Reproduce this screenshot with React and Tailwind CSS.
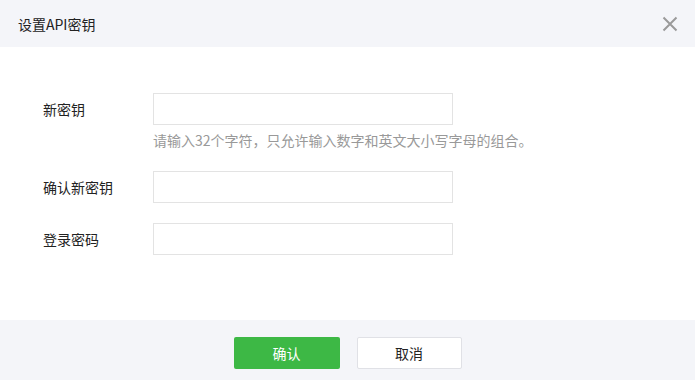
export default function App() {
  const font = { fontFamily: '"Noto Sans CJK SC", "Liberation Sans", sans-serif' };
  return (
    <div className="w-[695px] h-[380px] bg-white flex flex-col text-[14px] text-[#222]" style={font}>
      <div className="h-[47px] bg-[#f4f5f9] flex items-center justify-between pl-[18px] pr-[17px] shrink-0">
        <span className="text-[14px] text-[#222] leading-none">设置API密钥</span>
        <svg width="16" height="16" viewBox="0 0 16 16" className="text-[#9a9a9a]">
          <path d="M1.5 1.5 L14.5 14.5 M14.5 1.5 L1.5 14.5" stroke="currentColor" strokeWidth="2" fill="none" />
        </svg>
      </div>
      <div className="flex-1 pt-[46px] pl-[43px]">
        <div className="flex items-start">
          <div className="w-[110px] h-[32px] flex items-center">新密钥</div>
          <div className="flex flex-col">
            <div className="w-[300px] h-[32px] border border-[#e3e3e3] bg-white"></div>
            <div className="mt-[6px] text-[#999] leading-[18px]">请输入32个字符，只允许输入数字和英文大小写字母的组合。</div>
          </div>
        </div>
        <div className="flex items-center mt-[22px]">
          <div className="w-[110px]">确认新密钥</div>
          <div className="w-[300px] h-[32px] border border-[#e3e3e3] bg-white"></div>
        </div>
        <div className="flex items-center mt-[20px]">
          <div className="w-[110px]">登录密码</div>
          <div className="w-[300px] h-[32px] border border-[#e3e3e3] bg-white"></div>
        </div>
      </div>
      <div className="h-[60px] bg-[#f4f5f9] flex justify-center items-start pt-[17px] gap-[17px] shrink-0">
        <button className="w-[106px] h-[32px] rounded-[2px] bg-[#3db845] text-white text-[14px]">确认</button>
        <button className="w-[105px] h-[32px] rounded-[2px] bg-white border border-[#e0e1e6] text-[#222] text-[14px]">取消</button>
      </div>
    </div>
  );
}
